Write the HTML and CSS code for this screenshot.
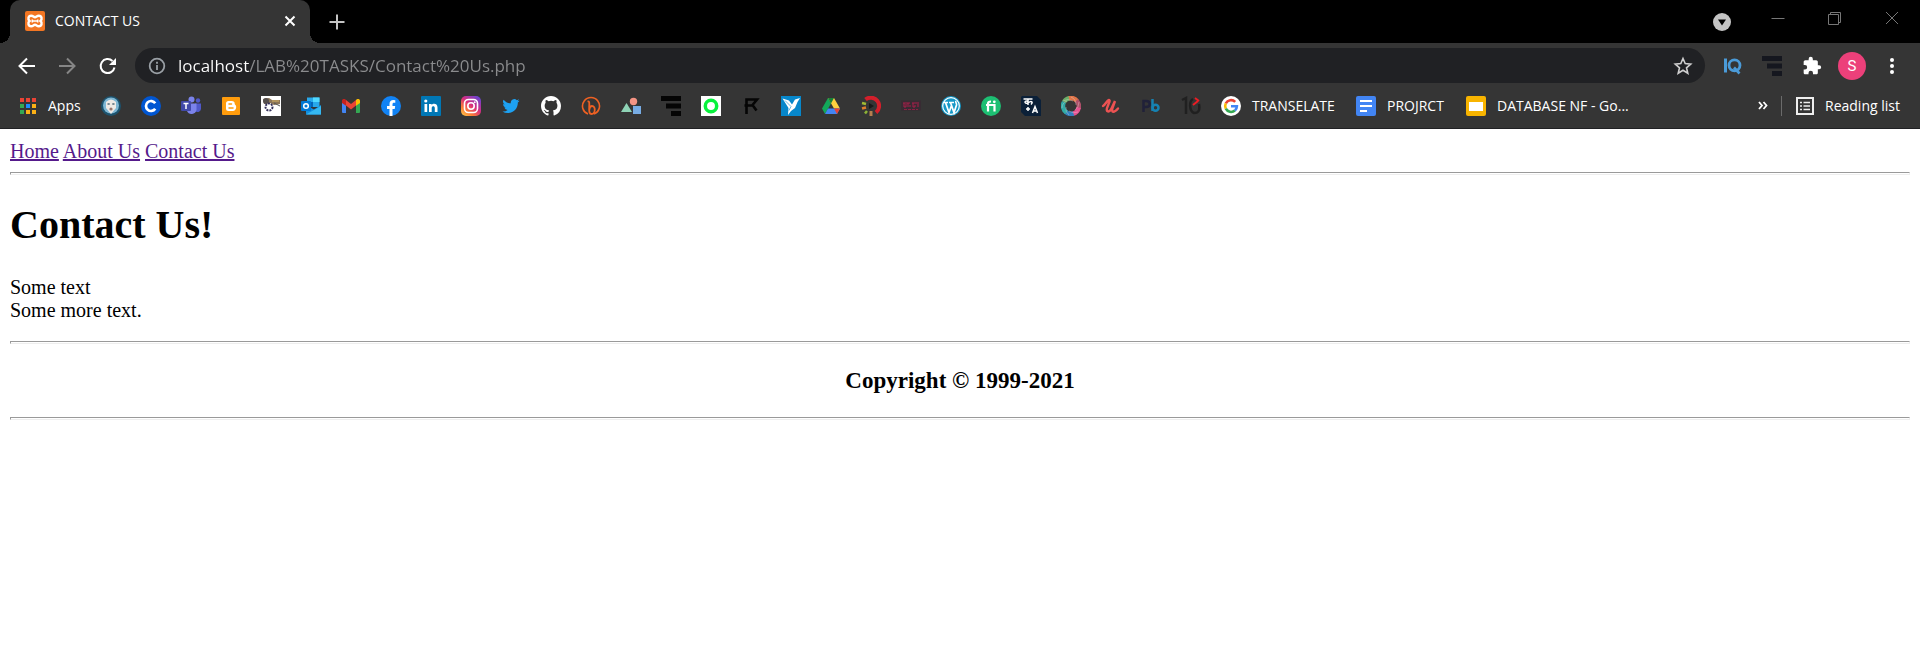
FILE: index.html
```html
<!DOCTYPE html>
<html lang="en">
<head>
<meta charset="utf-8">
<title>CONTACT US</title>
<link rel="stylesheet" href="styles.css">
</head>
<body>
<header class="browser">
  <div class="tabstrip">
    <div class="tab">
      <svg class="icon" viewBox="0 0 20 20"><rect width="20" height="20" rx="2" fill="#f37623"/><path d="M6.200 4.800c2 0 2.300 1.400 3.800 1.400s1.800-1.400 3.800-1.400c3.200 0 3.500 3.700 1.700 5.200 1.800 1.500 1.500 5.200-1.700 5.200-2 0-2.300-1.400-3.800-1.400s-1.800 1.400-3.800 1.400c-3.200 0-3.500-3.700-1.700-5.200C2.700 8.500 3 4.800 6.200 4.800z" fill="none" stroke="#fff" stroke-width="2.400"/><path d="M7.500 10h5M7.300 8.500v3M12.700 8.500v3" fill="none" stroke="#fff" stroke-width="1.600"/></svg>
      <span class="tab-title">CONTACT US</span>
      <button class="tab-close" aria-label="Close tab"><svg class="icon" viewBox="0 0 20 20"><path d="M5.500 5.500l9 9M14.500 5.500l-9 9" stroke="#fff" stroke-width="2"/></svg></button>
    </div>
    <button class="new-tab" aria-label="New tab"><svg class="icon" viewBox="0 0 20 20"><path d="M10 2.500v15M2.500 10h15" stroke="#c4c4c4" stroke-width="2"/></svg></button>
    <div class="window-controls">
      <button class="search-tabs" aria-label="Search tabs"><svg class="icon" viewBox="0 0 20 20"><circle cx="10" cy="10" r="9" fill="#c4c4c4"/><path d="M6 7.500h8l-4 6z" fill="#000"/></svg></button>
      <button class="win" aria-label="Minimize"><svg class="icon" viewBox="0 0 20 20"><path d="M3.500 10.500h13" stroke="#777"/></svg></button>
      <button class="win" aria-label="Restore"><svg class="icon" viewBox="0 0 20 20"><path d="M3.500 6.500h10v10h-10zM5.500 6.500v-2h10v10h-2" fill="none" stroke="#777"/></svg></button>
      <button class="win" aria-label="Close window"><svg class="icon" viewBox="0 0 20 20"><path d="M4 4l12 12M16 4L4 16" stroke="#777"/></svg></button>
    </div>
  </div>

  <div class="toolbar">
    <button class="tool" aria-label="Back"><svg class="icon" viewBox="0 0 20 20"><path d="M18 10H3M10 2.500L2.500 10l7.500 7.500" fill="none" stroke="#fff" stroke-width="2"/></svg></button>
    <button class="tool" aria-label="Forward"><svg class="icon" viewBox="0 0 20 20"><path d="M2 10h15M10 2.500l7.500 7.500-7.500 7.500" fill="none" stroke="#868686" stroke-width="2"/></svg></button>
    <button class="tool" aria-label="Reload"><svg class="icon" viewBox="0 0 20 20"><path d="M17.500 11.500A7 7 0 1 1 15.500 5" fill="none" stroke="#fff" stroke-width="2"/><path d="M19 2v7h-7z" fill="#fff"/></svg></button>
    <div class="address">
      <svg class="icon" viewBox="0 0 20 20"><circle cx="10" cy="10" r="7.300" fill="none" stroke="#9aa0a6" stroke-width="1.800"/><path d="M10 9v5M10 5.700v2" stroke="#9aa0a6" stroke-width="1.800"/></svg>
      <input class="url" type="text" aria-label="Address" value="localhost/LAB%20TASKS/Contact%20Us.php">
      <button class="star" aria-label="Bookmark this page"><svg class="icon" viewBox="0 0 20 20"><path d="M10 2.500l2.200 5.100 5.500.5-4.200 3.700 1.300 5.400-4.800-2.900-4.800 2.900 1.300-5.400L2.300 8.100l5.500-.5z" fill="none" stroke="#cfcfcf" stroke-width="1.600"/></svg></button>
    </div>
    <div class="extensions">
      <button class="tool" aria-label="IQ"><svg class="icon" viewBox="0 0 20 20"><path d="M3.500 2.500v14" stroke="#4b9bd8" stroke-width="3"/><circle cx="12.500" cy="9.300" r="5.500" fill="none" stroke="#4b9bd8" stroke-width="2.800"/><path d="M12 11.500l5.500 6" stroke="#4b9bd8" stroke-width="2.600"/></svg></button>
      <button class="tool" aria-label="Bars"><svg class="icon" viewBox="0 0 20 20"><path d="M0 0h20v5H0zM5 7.500h15v5H5zM10 15h10v5H10z" fill="#15171f"/></svg></button>
      <button class="tool" aria-label="Extensions"><svg class="icon" viewBox="0 0 24 24"><path d="M20.500 11H19V7c0-1.100-.9-2-2-2h-4V3.500a2.500 2.500 0 0 0-5 0V5H4c-1.100 0-2 .9-2 2v3.800h1.500a2.700 2.700 0 0 1 0 5.400H2V20c0 1.100.9 2 2 2h3.800v-1.500a2.700 2.700 0 0 1 5.400 0V22H17c1.100 0 2-.9 2-2v-4h1.500a2.500 2.500 0 0 0 0-5z" fill="#fff"/></svg></button>
      <button class="tool" aria-label="Profile"><span class="avatar">S</span></button>
      <button class="tool" aria-label="Menu"><svg class="icon" viewBox="0 0 20 20"><circle cx="10" cy="4" r="2" fill="#fff"/><circle cx="10" cy="10" r="2" fill="#fff"/><circle cx="10" cy="16" r="2" fill="#fff"/></svg></button>
    </div>
  </div>

  <nav class="bookmarks" aria-label="Bookmarks">
    <a class="mark apps" href="#"><svg class="icon" viewBox="0 0 20 20"><path d="M2 2h4v4H2zM8 2h4v4H8zM14 2h4v4h-4z" fill="#ea4335"/><path d="M2 8h4v4H2zM2 14h4v4H2z" fill="#34a853"/><path d="M8 8h4v4H8z" fill="#1a8cff"/><path d="M14 8h4v4h-4zM8 14h4v4H8zM14 14h4v4h-4z" fill="#fbb016"/></svg><span>Apps</span></a>
    <a class="mark" href="#" aria-label="Mask"><svg class="icon" viewBox="0 0 20 20"><circle cx="10" cy="10" r="10" fill="#1d536e"/><circle cx="10" cy="9.500" r="8" fill="#7fb7d4"/><path d="M5 6Q10 1 15 6v6l-5 6-5-6z" fill="#efe9e4"/><path d="M6.500 8h2.200M11.300 8h2.200" stroke="#526976" stroke-width="1.600"/><circle cx="10" cy="13" r="1.600" fill="#97766e"/></svg></a>
    <a class="mark" href="#" aria-label="Coursera"><svg class="icon" viewBox="0 0 20 20"><circle cx="10" cy="10" r="10" fill="#0056d2"/><path d="M14.200 7.300a5 5 0 1 0 0 5.400" fill="none" stroke="#fff" stroke-width="2.700"/></svg></a>
    <a class="mark" href="#" aria-label="Teams"><svg class="icon" viewBox="0 0 20 20"><circle cx="10.500" cy="3.500" r="3" fill="#7b83eb"/><circle cx="17" cy="4.500" r="2.200" fill="#5059c9"/><path d="M14 7.500h6V13a3.500 3.500 0 0 1-6 2z" fill="#5059c9"/><path d="M6 7.500h9.500V14a5 5 0 0 1-9.500 1z" fill="#7b83eb"/><rect y="5" width="10" height="10" rx="1" fill="#4149a8"/><path d="M2.500 7.500h5M5 7.500v5.500" stroke="#fff" stroke-width="1.500"/></svg></a>
    <a class="mark" href="#" aria-label="Blogger"><svg class="icon" viewBox="0 0 20 20"><rect x="1" y="1" width="18" height="18" rx="1" fill="#ff9c0d"/><path d="M7.500 5h3.200c2 0 3 1 3 2.800 0 1.500 1.500 1 1.500 3.200s-1.200 4-3.500 4H7.500A2.500 2.500 0 0 1 5 12.500v-5A2.500 2.500 0 0 1 7.500 5z" fill="#fff"/><path d="M8 8h2.500M8 12h4" stroke="#ff9c0d" stroke-width="1.500" stroke-linecap="round"/></svg></a>
    <a class="mark" href="#" aria-label="Machine"><svg class="icon" viewBox="0 0 20 20"><path d="M0 0h20v20H0z" fill="#fff"/><path d="M2 3l6-1 3 2h8v4l-6 1-4-2-6 1z" fill="#8d7657"/><circle cx="5" cy="5" r="3" fill="#544e4c"/><circle cx="8" cy="11" r="3.500" fill="none" stroke="#34305a" stroke-width="2" stroke-dasharray="2 1"/><path d="M11 5h7" stroke="#d5b368"/><path d="M13 7l6 3" stroke="#555"/></svg></a>
    <a class="mark" href="#" aria-label="Outlook"><svg class="icon" viewBox="0 0 20 20"><path d="M6 1.500h12.500V11H6z" fill="#28a8ea"/><path d="M12 1.500h6.500V6H12z" fill="#50d9ff"/><path d="M6 6h6v5H6z" fill="#0364b8"/><path d="M5 9l8 4.500L20 9v9.500H5z" fill="#1490df"/><path d="M5 18.500L20 10v8.500z" fill="#35b8f1"/><rect y="5" width="10" height="10" rx="1" fill="#0078d4"/><circle cx="5" cy="10" r="2.300" fill="none" stroke="#fff" stroke-width="1.500"/></svg></a>
    <a class="mark" href="#" aria-label="Gmail"><svg class="icon" viewBox="0 0 20 20"><path d="M1 5.500l4 3V17H2a1 1 0 0 1-1-1z" fill="#4285f4"/><path d="M19 5.500l-4 3V17h3a1 1 0 0 0 1-1z" fill="#34a853"/><path d="M1 7V5c0-2 2-2.500 3.500-1.500L5 4v5.800z" fill="#c5221f"/><path d="M5 4l5 4 5-4v5.500l-5 4-5-4z" fill="#ea4335"/><path d="M15 4l.5-.5C17 2.500 19 3 19 5v2l-4 2.800z" fill="#fbbc04"/></svg></a>
    <a class="mark" href="#" aria-label="Facebook"><svg class="icon" viewBox="0 0 20 20"><circle cx="10" cy="10" r="10" fill="#1183f5"/><path d="M8.500 20v-7H6v-3h2.500V8c0-2.600 1.500-4 3.800-4l2 .2v2.500H13c-1.200 0-1.500.7-1.500 1.500V10h2.700l-.5 3h-2.200v7z" fill="#fff"/></svg></a>
    <a class="mark" href="#" aria-label="LinkedIn"><svg class="icon" viewBox="0 0 20 20"><rect width="20" height="20" rx="1" fill="#0077b5"/><path d="M3.500 8h2.700v8H3.500zM8 8h2.600v1.100c1.300-2 5.900-1.800 5.900 2.400V16h-2.700v-4c0-2.500-3.100-2.300-3.100 0v4H8z" fill="#fff"/><circle cx="4.800" cy="5" r="1.600" fill="#fff"/></svg></a>
    <a class="mark" href="#" aria-label="Instagram"><svg class="icon" viewBox="0 0 20 20"><defs><linearGradient id="ig" x1="0" y1="1" x2=".8" y2="0"><stop offset="0" stop-color="#ffd34e"/><stop offset=".3" stop-color="#fb7b36"/><stop offset=".6" stop-color="#d72d80"/><stop offset="1" stop-color="#6b44d2"/></linearGradient></defs><rect width="20" height="20" rx="5" fill="url(#ig)"/><rect x="3.500" y="3.500" width="13" height="13" rx="4" fill="none" stroke="#fff" stroke-width="1.600"/><circle cx="10" cy="10" r="3.200" fill="none" stroke="#fff" stroke-width="1.600"/><circle cx="13.800" cy="6.200" r=".9" fill="#fff"/></svg></a>
    <a class="mark" href="#" aria-label="Twitter"><svg class="icon" viewBox="-2 -2 28 28"><path d="M23.950 4.570a10 10 0 0 1-2.820.77 4.960 4.960 0 0 0 2.160-2.720c-.95.550-2 .95-3.130 1.180a4.920 4.920 0 0 0-8.380 4.480C7.690 8.100 4.070 6.130 1.640 3.160a4.920 4.920 0 0 0 1.520 6.570 4.900 4.900 0 0 1-2.230-.61v.06a4.920 4.920 0 0 0 3.950 4.830 5 5 0 0 1-2.210.08 4.940 4.940 0 0 0 4.600 3.420A9.870 9.870 0 0 1 0 19.540a13.940 13.940 0 0 0 7.550 2.210c9.050 0 14-7.500 14-13.980l-.02-.63a9.940 9.940 0 0 0 2.420-2.570z" fill="#1da1f2"/></svg></a>
    <a class="mark" href="#" aria-label="GitHub"><svg class="icon" viewBox="0 0 16 16"><path d="M8 0C3.580 0 0 3.580 0 8c0 3.540 2.290 6.530 5.470 7.590.4.070.55-.17.55-.38v-1.490c-2.010.37-2.530-.49-2.690-.94-.09-.23-.48-.94-.82-1.130-.28-.15-.68-.52-.01-.53.630-.01 1.080.580 1.230.820.720 1.210 1.870.870 2.330.660.070-.520.280-.870.510-1.070-1.780-.2-3.640-.89-3.640-3.950 0-.870.310-1.590.820-2.150-.08-.2-.36-1.020.080-2.120 0 0 .670-.210 2.200.820a7.420 7.420 0 0 1 4 0c1.530-1.040 2.200-.820 2.200-.820.440 1.100.160 1.920.080 2.120.510.560.820 1.270.820 2.150 0 3.070-1.870 3.750-3.650 3.950.290.250.540.730.540 1.480v2.200c0 .21.150.46.550.38A8.010 8.010 0 0 0 16 8c0-4.420-3.580-8-8-8z" fill="#fff"/></svg></a>
    <a class="mark" href="#" aria-label="Bitly"><svg class="icon" viewBox="0 0 20 20"><path d="M7 18a8.500 8.500 0 1 1 6 0" fill="none" stroke="#ee6123" stroke-width="1.600"/><path d="M6.500 5.500c2-.5 2 1 1.700 5.500-.3 5 .3 7 2.300 7 4 0 4.500-8 .5-8-2 0-2.500 2-2.800 4" fill="none" stroke="#ee6123" stroke-width="1.800"/></svg></a>
    <a class="mark" href="#" aria-label="Shapes"><svg class="icon" viewBox="0 0 20 20"><circle cx="12.500" cy="5.500" r="3.700" fill="#f49484"/><path d="M5.500 7l5.500 9H0z" fill="#8fd3b6"/><path d="M12 10h8v8h-8z" fill="#77ace4"/></svg></a>
    <a class="mark" href="#" aria-label="Black bars"><svg class="icon" viewBox="0 0 20 20"><path d="M0 0h20v5H0zM5 7.500h15v5H5zM10 15h10v5H10z" fill="#050505"/></svg></a>
    <a class="mark" href="#" aria-label="Green ring"><svg class="icon" viewBox="0 0 20 20"><path d="M0 0h20v20H0z" fill="#fff"/><circle cx="10" cy="10" r="5.700" fill="none" stroke="#08f23d" stroke-width="3.500"/></svg></a>
    <a class="mark" href="#" aria-label="Monogram"><svg class="icon" viewBox="0 0 20 20"><path d="M5.500 18V3.500H16L11.500 9l4 5.500M3.500 9.500h8" fill="none" stroke="#050505" stroke-width="2.600"/></svg></a>
    <a class="mark" href="#" aria-label="Freelancer"><svg class="icon" viewBox="0 0 20 20"><path d="M0 0h20v20H0z" fill="#0787cb"/><path d="M1.500 2.500l6.500 2 3 4 3-5 5-1.500-2.500 4-2.500 6-4 3-3 4 .5-7z" fill="#fff"/><path d="M4 4.500l6 6-2 4" fill="none" stroke="#0787cb" stroke-width=".6"/></svg></a>
    <a class="mark" href="#" aria-label="Google Drive"><svg class="icon" viewBox="0 0 20 20"><path d="M7 2L1 12.500 4 18l6-10.500z" fill="#12a85a"/><path d="M7 2h6l6 10.500h-6z" fill="#ffcf3f"/><path d="M7 12.500h12L16 18H4z" fill="#4285f4"/><path d="M13 12.500h6L16 18z" fill="#e94235"/><path d="M7 2h6l-3 5.500z" fill="#188038"/></svg></a>
    <a class="mark" href="#" aria-label="Player"><svg class="icon" viewBox="0 0 20 20"><path d="M4.500 3.500A8 8 0 1 1 15 16.500" fill="none" stroke="#d31f2b" stroke-width="4"/><path d="M1 7l4 1" stroke="#a2ba34" stroke-width="2.500"/><path d="M1 12.500l4-1" stroke="#df7e2c" stroke-width="2.500"/><path d="M4 17.500L6 15" stroke="#8db336" stroke-width="2.500"/><path d="M10 15v5" stroke="#b57e4e" stroke-width="3"/><path d="M8 7l5 3-5 3z" fill="#191919"/></svg></a>
    <a class="mark" href="#" aria-label="Crimson wordmark"><svg class="icon" viewBox="0 0 20 20"><path d="M0 4.500h20v10H0z" fill="#382b33"/><path d="M2 7h7M11 7h7M3 7v4h2V8M7 7v4M8 10h2M12 7v4h2V9M17 8v3" fill="none" stroke="#a81e4b" stroke-width="1"/><path d="M3 13.500h14" stroke="#8b2144" stroke-dasharray="3 1"/></svg></a>
    <a class="mark" href="#" aria-label="WordPress"><svg class="icon" viewBox="0 0 20 20"><circle cx="10" cy="10" r="10" fill="#1698c7"/><circle cx="10" cy="10" r="8.300" fill="none" stroke="#fff" stroke-width="1.200"/><path d="M3 6.500h4M8 6.500h5M4.500 6.500l3.500 10 2.500-7M9.500 6.500l3.500 10 2.500-7.500c.5-2-1.500-2.500-.5-4" fill="none" stroke="#fff" stroke-width="1.700"/></svg></a>
    <a class="mark" href="#" aria-label="Fiverr"><svg class="icon" viewBox="0 0 20 20"><circle cx="10" cy="10" r="10" fill="#1dbf73"/><path d="M7 15.500V7.500C7 6 8 5.500 10 5.500M5 9h8.500v6.500" fill="none" stroke="#fff" stroke-width="2.200"/><circle cx="13.300" cy="5.800" r="1.400" fill="#fff"/></svg></a>
    <a class="mark" href="#" aria-label="Translator"><svg class="icon" viewBox="0 0 20 20"><path d="M1 0h15l4 4v16H4l-4-4V1z" fill="#0b2038"/><path d="M2.500 3h9M7 3v6M7 5.500c-4-2-4 3 0 1.500 4-3 5-.5 3 1.500M11.500 17L14 10.500l2.500 6.500M12.500 15h3M7 11v4M5 13h4" fill="none" stroke="#fff" stroke-width="1.500"/></svg></a>
    <a class="mark" href="#" aria-label="Colour ring"><svg class="icon" viewBox="0 0 20 20"><g fill="none" stroke-width="4.500"><path d="M3 6a8 8 0 0 1 6-4" stroke="#6caf68"/><path d="M8 2.200a8 8 0 0 1 8 2.800" stroke="#df7448"/><path d="M15.500 4.500a8 8 0 0 1 2 8" stroke="#ad5069"/><path d="M17.700 11.500a8 8 0 0 1-6 6.300" stroke="#e55291"/><path d="M12.500 17.500a8 8 0 0 1-8-1.800" stroke="#347fbd"/><path d="M5.500 16.500A8 8 0 0 1 3 6" stroke="#31aaa5"/></g><g fill="none" stroke="#e7e6e2" stroke-width=".5" opacity=".7"><path d="M2 5q5-3 10 0M10 1q5 2 5 8M18 6q0 5-4 8M17 16q-5 2-9-1M8 19q-4-3-3-8M1 12q0-5 5-7"/></g></svg></a>
    <a class="mark" href="#" aria-label="Udemy"><svg class="icon" viewBox="0 0 20 20"><path d="M2 10c2-1 3-4 5-5.500C8 3.500 9 4 8.500 5.500L6 12c-1 4 2 4.500 4 1.500l4-8.500-2.500 7c-1.500 5 1.500 5 5.500.5" fill="none" stroke="#ec5252" stroke-width="2.400" stroke-linecap="round"/></svg></a>
    <a class="mark" href="#" aria-label="Pb"><svg class="icon" viewBox="0 0 20 20"><path d="M2.500 16V5H5c5 0 5 6 0 6H3" fill="none" stroke="#202139" stroke-width="2.500"/><path d="M11.500 3v12" stroke="#1682b2" stroke-width="2.500"/><circle cx="14.500" cy="11.800" r="3" fill="none" stroke="#1682b2" stroke-width="2.500"/></svg></a>
    <a class="mark" href="#" aria-label="Ten"><svg class="icon" viewBox="0 0 20 20"><path d="M1 4l4-2v16M12 3c-4 2-4 12 1 14 5 0 6-3 5-9" fill="none" stroke="#202020" stroke-width="2.500"/><path d="M12 9l5-4M14 2l4 3" stroke="#ed1c24" stroke-width="2"/></svg></a>
    <a class="mark translate" href="#"><svg class="icon" viewBox="0 0 20 20"><circle cx="10" cy="10" r="10" fill="#fff"/><g fill="none" stroke-width="2.600"><path d="M4.800 7.300A5.900 5.900 0 0 1 14.200 5.800" stroke="#ea4335"/><path d="M4.800 12.700a6 6 0 0 1 0-5.400" stroke="#fbbc05"/><path d="M13.900 14.500a5.900 5.900 0 0 1-9.100-1.800" stroke="#34a853"/><path d="M10 10.200h5.900a5.900 5.900 0 0 1-2 4.300" stroke="#4285f4"/></g></svg><span>TRANSELATE</span></a>
    <a class="mark project" href="#"><svg class="icon" viewBox="0 0 20 20"><rect width="20" height="20" rx="2" fill="#4285f4"/><path d="M4 5h12M4 10h12M4 15h7" stroke="#fff" stroke-width="2"/></svg><span>PROJRCT</span></a>
    <a class="mark" href="#"><svg class="icon" viewBox="0 0 20 20"><rect width="20" height="20" rx="2" fill="#f8b400"/><path d="M3 6h14v9H3z" fill="#fff"/></svg><span>DATABASE NF - Go...</span></a>
    <div class="bookmarks-end">
      <button class="more" aria-label="More bookmarks"><svg class="icon" viewBox="0 0 20 20"><path d="M6 6l3 3.500L6 13M10.500 6l3 3.500-3 3.500" fill="none" stroke="#fff" stroke-width="1.800"/></svg></button>
      <button class="reading"><svg class="icon" viewBox="0 0 20 20"><path d="M2 2h16v16H2z" fill="none" stroke="#eee" stroke-width="2"/><path d="M5 6.500h2M5 10h2M5 13.500h2M8.500 6.500H15M8.500 10H15M8.500 13.500H15" stroke="#eee" stroke-width="1.500"/></svg><span>Reading list</span></button>
    </div>
  </nav>
</header>

<main class="page">
  <nav><a href="#">Home</a> <a href="#">About Us</a> <a href="#">Contact Us</a></nav>
  <hr>
  <h1>Contact Us!</h1>
  <p>Some text<br>Some more text.</p>
  <hr>
  <footer>
    <h3>Copyright © 1999-2021</h3>
    <hr>
  </footer>
</main>
</body>
</html>
```

FILE: styles.css
```css
* { box-sizing: border-box; }
body { margin: 0; background: #fff; }

button {
  display: flex;
  align-items: center;
  justify-content: center;
  padding: 0;
  border: 0;
  background: none;
  color: inherit;
  font: inherit;
}

.icon { display: block; flex: none; width: 20px; height: 20px; }

.browser {
  background: #353535;
  border-bottom: 1px solid #202124;
  color: #fff;
  font: 14px/20px "Open Sans", "Noto Sans", sans-serif;
}

/* Tab strip */
.tabstrip { display: flex; height: 43px; padding-left: 10px; background: #000; }
.tab {
  position: relative;
  display: flex;
  align-items: center;
  width: 300px;
  padding: 0 10px 1px 15px;
  gap: 10px;
  border-radius: 10px 10px 0 0;
  background: #353535;
}
.tab::before, .tab::after {
  content: "";
  position: absolute;
  bottom: 0;
  width: 10px;
  height: 10px;
}
.tab::before { right: 100%; background: radial-gradient(circle at 0 0, #000 10px, #353535 10px); }
.tab::after { left: 100%; background: radial-gradient(circle at 100% 0, #000 10px, #353535 10px); }
.tab-title { flex: 1; }
.new-tab { width: 54px; }
.window-controls { display: flex; align-items: center; margin-left: auto; }
.search-tabs { width: 54px; height: 44px; }
.win { width: 57px; height: 36px; align-self: flex-start; }

/* Toolbar */
.toolbar { display: flex; align-items: center; height: 45px; padding: 0 8px 0 7px; }
.tool { width: 40px; height: 40px; }
.address {
  display: flex;
  flex: 1;
  align-items: center;
  height: 35px;
  margin: 0 7px 0 8px;
  padding: 0 12px;
  gap: 11px;
  border-radius: 18px;
  background: #202124;
}
/* The host part of the address is brighter than its path */
.url {
  flex: 1;
  min-width: 0;
  height: 26px;
  padding: 0;
  border: 0;
  outline: 0;
  background: linear-gradient(to right, #fff 71px, #8b8c8e 71px);
  -webkit-background-clip: text;
  background-clip: text;
  -webkit-text-fill-color: transparent;
  font: 17px/26px "Open Sans", "Noto Sans", sans-serif;
}
.extensions { display: flex; }
.avatar {
  width: 28px;
  height: 28px;
  border-radius: 50%;
  background: #ec407a;
  font: 15px/28px Roboto, sans-serif;
  text-align: center;
}

/* Bookmarks bar */
.bookmarks { display: flex; align-items: center; height: 40px; padding: 0 18px 4px; gap: 20px; }
.mark { display: flex; flex: none; gap: 11px; color: #fff; text-decoration: none; white-space: nowrap; }
.apps { width: 63px; gap: 10px; }
.translate { width: 115px; }
.project { width: 90px; }
.bookmarks-end { display: flex; align-items: center; margin-left: auto; }
.more { width: 36px; }
.reading {
  justify-content: flex-start;
  width: 121px;
  padding-left: 13px;
  gap: 10px;
  border-left: 1px solid #6b6b6b;
  white-space: nowrap;
}

/* Page */
.page { padding: 11px 10px; color: #000; font: 20px/23px "Liberation Serif", "Times New Roman", serif; }
.page a { color: #551a8b; text-decoration-thickness: 2px; }
.page hr { height: 3px; margin: 9px 0; border: 1px solid; border-color: #9a9a9a #eee #eee #9a9a9a; }
.page h1 { margin: 27px 0 28px; font-size: 40px; line-height: 46px; }
.page p { margin: 0 0 19px; }
.page h3 { margin: 23px 0; font-size: 23px; line-height: 27px; text-align: center; }
```
